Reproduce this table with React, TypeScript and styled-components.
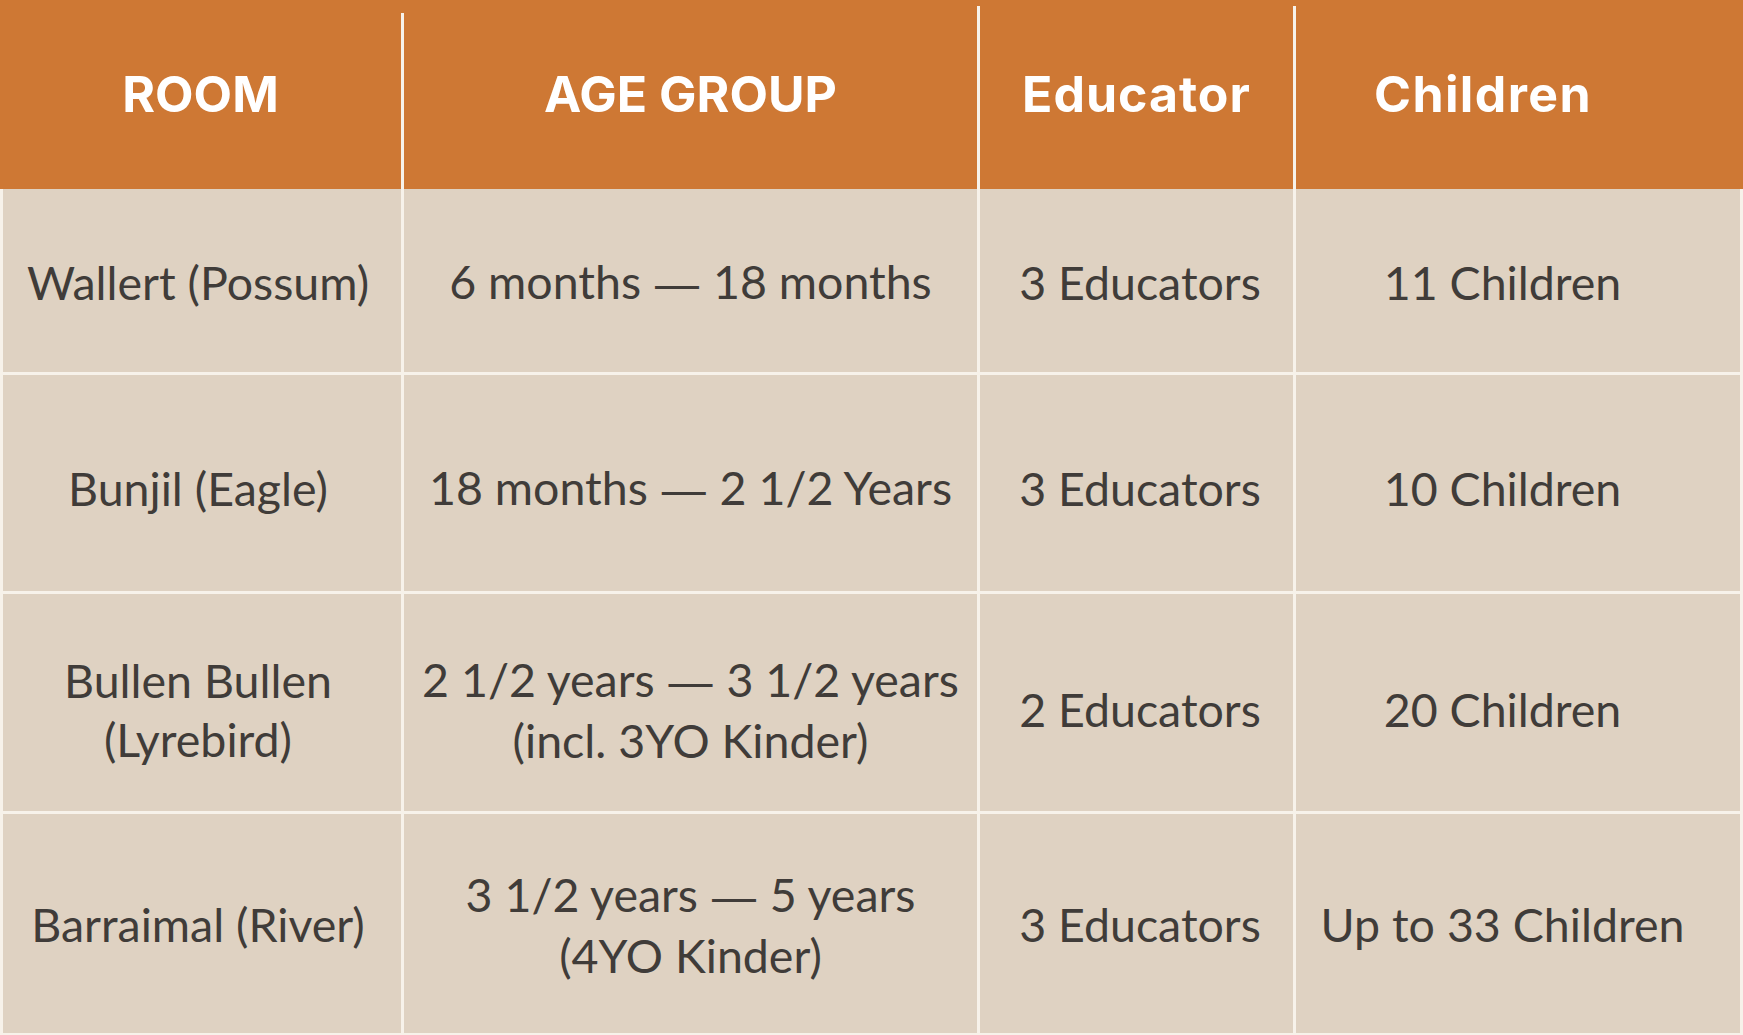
import React from "react";
import styled, { createGlobalStyle } from "styled-components";

const Global = createGlobalStyle`
  html, body { margin: 0; padding: 0; background: #dfd2c2; }
  body { overflow: hidden; }
`;

const COLS = "404px 576px 316px 447px";
const LINE = "#f7f2ea";

const Table = styled.div`
  width: 1743px;
  display: flex;
  flex-direction: column;
`;

const HeaderRow = styled.div`
  display: grid;
  grid-template-columns: ${COLS};
  height: 189px;
  background: #ce7834;
`;

const HeaderCell = styled.div<{ $top: number; $last?: boolean; $shift?: number; $ls?: number }>`
  margin-top: ${(p) => p.$top}px;
  padding-bottom: ${(p) => p.$top + 2}px;
  padding-right: ${(p) => p.$shift ?? 0}px;
  border-right: ${(p) => (p.$last ? "none" : `3px solid ${LINE}`)};
  display: flex;
  align-items: center;
  justify-content: center;
  font-family: Inter, "Noto Sans", sans-serif;
  font-weight: 700;
  font-size: 50px;
  letter-spacing: ${(p) => p.$ls ?? 0}px;
  color: #ffffff;
`;

const BodyRow = styled.div<{ $h: number }>`
  display: grid;
  grid-template-columns: ${COLS};
  height: ${(p) => p.$h}px;
  border-bottom: 3px solid ${LINE};
  box-sizing: border-box;
`;

const Cell = styled.div<{ $first?: boolean; $pl: number; $pr: number; $pt: number }>`
  border-left: ${(p) => (p.$first ? `3px solid ${LINE}` : "none")};
  border-right: 3px solid ${LINE};
  padding: ${(p) => p.$pt}px ${(p) => p.$pr}px 0 ${(p) => p.$pl}px;
  display: flex;
  align-items: center;
  justify-content: center;
  text-align: center;
  font-family: Lato, "Open Sans", sans-serif;
  font-size: 46.5px;
  line-height: 59px;
  color: #403c39;
`;

const Dash = styled.span`
  font-family: "Liberation Sans", Arial, sans-serif;
  font-size: 44px;
  margin: 0 2px;
`;

const colPad = [
  { pl: 0, pr: 8 },
  { pl: 0, pr: 0 },
  { pl: 7, pr: 0 },
  { pl: 0, pr: 31 },
];

const rows = [
  { h: 186, pt: 4, cells: ["Wallert (Possum)", "6 months — 18 months", "3 Educators", "11 Children"] },
  { h: 219, pt: 11, cells: ["Bunjil (Eagle)", "18 months — 2 1/2 Years", "3 Educators", "10 Children"] },
  { h: 220, pt: 14, cells: ["Bullen Bullen\n(Lyrebird)", "2 1/2 years — 3 1/2 years\n(incl. 3YO Kinder)", "2 Educators", "20 Children"] },
  { h: 222, pt: 2, cells: ["Barraimal (River)", "3 1/2 years — 5 years\n(4YO Kinder)", "3 Educators", "Up to 33 Children"] },
];

const Line = ({ text }: { text: string }) => {
  const parts = text.split("—");
  return (
    <>
      {parts.map((p, i) => (
        <React.Fragment key={i}>
          {i > 0 && <Dash>—</Dash>}
          {p}
        </React.Fragment>
      ))}
    </>
  );
};

const Lines = ({ text }: { text: string }) => (
  <span>
    {text.split("\n").map((t, i) => (
      <React.Fragment key={i}>
        {i > 0 && <br />}
        <Line text={t} />
      </React.Fragment>
    ))}
  </span>
);

export default function App() {
  return (
    <>
      <Global />
      <Table>
        <HeaderRow>
          <HeaderCell $top={13}>ROOM</HeaderCell>
          <HeaderCell $top={6}>AGE GROUP</HeaderCell>
          <HeaderCell $top={6} $ls={1}>Educator</HeaderCell>
          <HeaderCell $top={0} $last $shift={73} $ls={1.4}>Children</HeaderCell>
        </HeaderRow>
        {rows.map((r, i) => (
          <BodyRow key={i} $h={r.h}>
            {r.cells.map((c, j) => (
              <Cell key={j} $first={j === 0} $pl={colPad[j].pl} $pr={colPad[j].pr} $pt={r.pt}>
                <Lines text={c} />
              </Cell>
            ))}
          </BodyRow>
        ))}
      </Table>
    </>
  );
}
